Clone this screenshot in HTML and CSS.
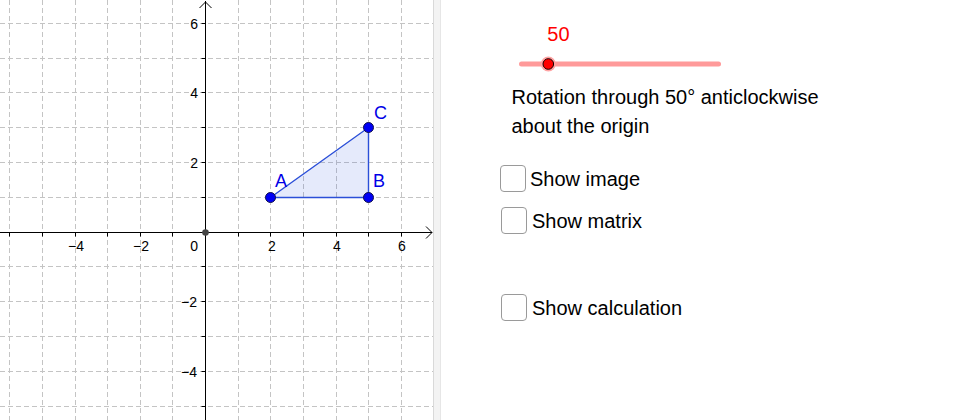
FILE: index.html
```html
<!DOCTYPE html>
<html lang="en">
<head>
<meta charset="utf-8">
<title>Rotation through 50°</title>
<link rel="stylesheet" href="styles.css">
</head>
<body>
<div class="app">
  <div class="graphics">
    <svg class="plot" width="433" height="420" viewBox="0 0 433 420" xmlns="http://www.w3.org/2000/svg">
      <g class="grid">
        <line x1="9.5" y1="0" x2="9.5" y2="420"/>
        <line x1="42.5" y1="0" x2="42.5" y2="420"/>
        <line x1="75.5" y1="0" x2="75.5" y2="420"/>
        <line x1="107.5" y1="0" x2="107.5" y2="420"/>
        <line x1="140.5" y1="0" x2="140.5" y2="420"/>
        <line x1="172.5" y1="0" x2="172.5" y2="420"/>
        <line x1="238.5" y1="0" x2="238.5" y2="420"/>
        <line x1="270.5" y1="0" x2="270.5" y2="420"/>
        <line x1="303.5" y1="0" x2="303.5" y2="420"/>
        <line x1="336.5" y1="0" x2="336.5" y2="420"/>
        <line x1="368.5" y1="0" x2="368.5" y2="420"/>
        <line x1="401.5" y1="0" x2="401.5" y2="420"/>
        <line x1="0" y1="23.5" x2="433" y2="23.5"/>
        <line x1="0" y1="58.5" x2="433" y2="58.5"/>
        <line x1="0" y1="92.5" x2="433" y2="92.5"/>
        <line x1="0" y1="127.5" x2="433" y2="127.5"/>
        <line x1="0" y1="162.5" x2="433" y2="162.5"/>
        <line x1="0" y1="197.5" x2="433" y2="197.5"/>
        <line x1="0" y1="266.5" x2="433" y2="266.5"/>
        <line x1="0" y1="301.5" x2="433" y2="301.5"/>
        <line x1="0" y1="336.5" x2="433" y2="336.5"/>
        <line x1="0" y1="371.5" x2="433" y2="371.5"/>
        <line x1="0" y1="406.5" x2="433" y2="406.5"/>
      </g>
      <g class="axes">
        <line x1="0" y1="232.5" x2="432" y2="232.5"/>
        <line x1="205.5" y1="1" x2="205.5" y2="420"/>
        <polyline class="arrow" points="199.5,8 205.5,2 211.5,8"/>
        <polyline class="arrow" points="426,226.5 432,232.5 426,238.5"/>
        <path class="ticks" d="M9.5 232.5v4M42.5 232.5v4M75.5 232.5v4M107.5 232.5v4M140.5 232.5v4M172.5 232.5v4M238.5 232.5v4M270.5 232.5v4M303.5 232.5v4M336.5 232.5v4M368.5 232.5v4M401.5 232.5v4M205.5 23.5h-4M205.5 58.5h-4M205.5 92.5h-4M205.5 127.5h-4M205.5 162.5h-4M205.5 197.5h-4M205.5 266.5h-4M205.5 301.5h-4M205.5 336.5h-4M205.5 371.5h-4M205.5 406.5h-4"/>
      </g>
      <g class="labels">
        <text x="76" y="251" text-anchor="middle">−4</text>
        <text x="141" y="251" text-anchor="middle">−2</text>
        <text x="198" y="251" text-anchor="end">0</text>
        <text x="272" y="251" text-anchor="middle">2</text>
        <text x="337" y="251" text-anchor="middle">4</text>
        <text x="402" y="251" text-anchor="middle">6</text>
        <text x="198" y="29" text-anchor="end">6</text>
        <text x="198" y="98" text-anchor="end">4</text>
        <text x="198" y="168" text-anchor="end">2</text>
        <text x="197" y="307" text-anchor="end">−2</text>
        <text x="197" y="377" text-anchor="end">−4</text>
      </g>
      <circle class="origin" cx="205.5" cy="232.5" r="3.3"/>
      <polygon class="tri" points="270.5,197.5 368.5,197.5 368.5,127.5"/>
      <g class="pts">
        <circle cx="270.5" cy="197.5" r="5"/>
        <circle cx="368.5" cy="197.5" r="5"/>
        <circle cx="368.5" cy="127.5" r="5"/>
      </g>
      <g class="ptlabels">
        <text x="275" y="187">A</text>
        <text x="373" y="187">B</text>
        <text x="374" y="119">C</text>
      </g>
    </svg>
  </div>
  <div class="divider"></div>
  <div class="panel">
    <div class="slider-value">50</div>
    <svg class="slider" width="208" height="20" viewBox="0 0 208 20" xmlns="http://www.w3.org/2000/svg">
      <line class="track" x1="4.5" y1="10" x2="201.5" y2="10"/>
      <circle class="halo" cx="31.3" cy="10" r="7.5"/>
      <circle class="knob" cx="31.3" cy="10" r="5.3"/>
    </svg>
    <p class="caption">Rotation through 50° anticlockwise<br>about the origin</p>
    <label class="check first"><span class="box"></span>Show image</label>
    <label class="check second"><span class="box"></span>Show matrix</label>
    <label class="check third"><span class="box"></span>Show calculation</label>
  </div>
</div>
</body>
</html>
```
FILE: styles.css
```css
* { box-sizing: border-box; }
html, body {
  margin: 0;
  padding: 0;
  background: #ffffff;
}
body {
  font-family: "Liberation Sans", Arial, sans-serif;
  color: #000;
}
.app {
  display: flex;
  width: 980px;
  height: 420px;
  overflow: hidden;
}
.graphics {
  width: 433px;
  height: 420px;
  flex: none;
}
.plot { display: block; }
.grid line {
  stroke: #c4c4c4;
  stroke-width: 1;
  stroke-dasharray: 5 3;
}
.axes line, .axes .arrow, .axes .ticks {
  stroke: #000;
  stroke-width: 1;
  fill: none;
}
.labels text {
  font-family: "Liberation Sans", Arial, sans-serif;
  font-size: 14px;
  fill: #000;
}
.origin { fill: #444; }
.tri {
  fill: rgba(40, 80, 220, 0.12);
  stroke: #2b4fd8;
  stroke-width: 1.4;
}
.pts circle {
  fill: #0000f5;
  stroke: #10104a;
  stroke-width: 1;
}
.ptlabels text {
  font-family: "Liberation Sans", Arial, sans-serif;
  font-size: 18px;
  fill: #0000e6;
}
.divider {
  width: 8px;
  height: 420px;
  flex: none;
  background: #f3f3f3;
  border-left: 1px solid #d9d9d9;
  border-right: 1px solid #e6e6e6;
}
.panel {
  flex: 1;
  padding-top: 22px;
  font-size: 20px;
}
.slider-value {
  margin-left: 106.3px;
  line-height: 24px;
  color: #ff0000;
}
.slider {
  display: block;
  margin-top: 8px;
  margin-left: 76px;
}
.track {
  stroke: #ff9a9a;
  stroke-width: 5;
  stroke-linecap: round;
}
.halo { fill: #ffa3a3; }
.knob {
  fill: #ff0000;
  stroke: #1a0000;
  stroke-width: 1;
}
.caption {
  margin: 9px 0 0 70.5px;
  line-height: 29px;
}
.check {
  display: flex;
  align-items: center;
  height: 27px;
  line-height: 24px;
}
.box {
  width: 26px;
  height: 27px;
  border: 1.5px solid #9a9a9a;
  border-radius: 4px;
  background: #fff;
  flex: none;
}
.check.first {
  margin: 24px 0 0 59px;
  gap: 4px;
}
.check.second {
  margin: 15px 0 0 60px;
  gap: 5px;
}
.check.third {
  margin: 60px 0 0 60px;
  gap: 5px;
}
```
